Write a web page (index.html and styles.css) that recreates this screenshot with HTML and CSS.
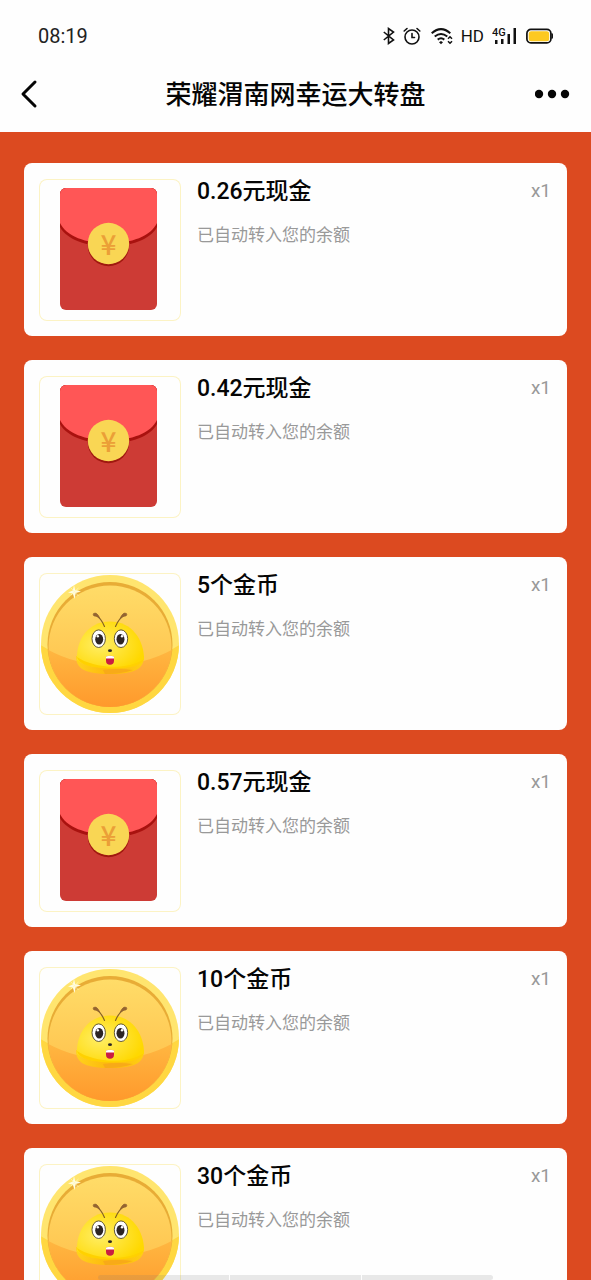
FILE: index.html
```html
<!DOCTYPE html>
<html lang="zh-CN">
<head>
<meta charset="utf-8">
<meta name="viewport" content="width=device-width, initial-scale=1">
<title>荣耀渭南网幸运大转盘</title>
<link rel="stylesheet" href="styles.css">
</head>
<body>
<svg class="sprite" aria-hidden="true">
  <defs>
    <linearGradient id="coinTop" x1="0" y1="0" x2="0" y2="1">
      <stop offset="0" stop-color="#ffdc68"/><stop offset="1" stop-color="#ffb944"/>
    </linearGradient>
    <linearGradient id="coinLow" gradientUnits="userSpaceOnUse" x1="0" y1="74" x2="0" y2="134">
      <stop offset="0" stop-color="#ffb842"/><stop offset="1" stop-color="#ff992c"/>
    </linearGradient>
    <radialGradient id="beeBody" cx="0.35" cy="0.5" r="0.65">
      <stop offset="0" stop-color="#ffee66"/><stop offset="1" stop-color="#ffd800"/>
    </radialGradient>
    <linearGradient id="beeBase" x1="0" y1="0" x2="1" y2="0">
      <stop offset="0" stop-color="#ffd21c"/><stop offset="0.5" stop-color="#fdb70c"/><stop offset="1" stop-color="#ffcf12"/>
    </linearGradient>
    <clipPath id="coinClip"><circle cx="71" cy="71" r="69"/></clipPath>
    <clipPath id="faceClip"><circle cx="71" cy="72" r="62"/></clipPath>
    <clipPath id="packetClip"><rect x="21" y="9" width="97" height="122" rx="6"/></clipPath>
  </defs>
  <symbol id="coin" viewBox="0 0 142 142">
    <circle cx="71" cy="71" r="69" fill="#ffe56f"/>
    <path d="M0 71Q32 92 71 92T142 71V142H0Z" fill="#ffd741" clip-path="url(#coinClip)"/>
    <circle cx="71" cy="71.500" r="62.500" fill="#e8ac36"/>
    <g clip-path="url(#faceClip)">
      <circle cx="71" cy="74" r="61.500" fill="url(#coinTop)"/>
      <path d="M6 75Q35 92 71 92T136 75V142H6Z" fill="url(#coinLow)"/>
    </g>
    <path d="M37 83C37 94 43 101 71 101S105 94 105 83Z" fill="url(#beeBase)"/>
    <path d="M38 87C37 67 49 48.500 71 48.500S105 67 105 86C97 92 86 94.500 70 94.500S44 92 38 87Z" fill="url(#beeBody)"/>
    <path d="M38 84C52 94 86 99 105 86C103 92 91 96 72 95.500C53 95 40 92 38 84Z" fill="#ffd100"/>
    <path d="M66 101Q83 101 94 97Q80 95 64 97Z" fill="#f8aa18"/>
    <path d="M65.500 53.500Q62 45 56.500 42M76.500 53.500Q80 45 86 42" fill="none" stroke="#866325" stroke-width="1.200" stroke-linecap="round"/>
    <path d="M54.500 40.500Q58 38.500 61 45.500Q57.500 42.500 55 43Q53.500 42 54.500 40.500ZM87.500 40.500Q84 38.500 81 45.500Q84.500 42.500 87 43Q88.500 42 87.500 40.500Z" fill="#946431" stroke="#946431" stroke-width="0.600"/>
    <g fill="#fff" stroke="#4d452e" stroke-width="0.900">
      <ellipse cx="59.700" cy="65.700" rx="6.700" ry="8.800"/><ellipse cx="82" cy="65.700" rx="6.700" ry="8.800"/>
    </g>
    <g fill="#2c2525">
      <ellipse cx="60.200" cy="66.300" rx="4" ry="5.200"/><ellipse cx="81.500" cy="66.300" rx="4" ry="5.200"/>
      <ellipse cx="71" cy="77.700" rx="2" ry="1.400"/>
    </g>
    <circle cx="58.800" cy="63.300" r="1.200" fill="#fff"/><circle cx="83" cy="63.300" r="1.200" fill="#fff"/>
    <path d="M67 83.500Q71 82 75 83.500V87.500C75 90.500 73.500 91.800 71 91.800S67 90.500 67 87.500Z" fill="#c91d43"/>
    <path d="M67 83.500Q71 82 75 83.500V85.500H67Z" fill="#fff"/>
    <path d="M35 12L36.200 17L42 18.500L36.800 20L35.500 26L33.800 20.500L29 19.500L33.800 17.500Z" fill="#fffce0"/>
    <path d="M31.500 14.500L39.500 23M39.500 15L32 22" stroke="#fff6bd" stroke-width="0.700"/>
  </symbol>
</svg>

<div class="screen">
  <header class="top">
    <div class="status">
      <span class="time">08:19</span>
      <div class="indicators">
        <svg width="12" height="18" viewBox="0 0 12 18" fill="none" stroke="#111" stroke-width="1.600"><path d="M0.800 5L10.500 13L5.500 16.500V1.500L10.500 5L0.800 13"/></svg>
        <svg width="20" height="18" viewBox="0 0 20 18" fill="none" stroke="#111" stroke-width="1.600" stroke-linecap="round"><circle cx="9" cy="10" r="7"/><path d="M9 6.500V10.500H11.500M1.200 4L4 1.500M16.800 4L14 1.500"/></svg>
        <svg width="22" height="18" viewBox="0 0 22 18" fill="none" stroke="#111" stroke-width="2"><path d="M0.700 6.200Q10 -2 19.300 6.200M3.700 9.500Q10 4.500 16.300 9.500M6.700 12.600Q10 10 13.300 12.600"/><path d="M10 14L12 15.300L10 17.300L8 15.300Z" fill="#111" stroke="none"/><path d="M17 11.800L19 9.800L21 11.800M17 14.200L19 16.200L21 14.200" stroke-width="1.500"/></svg>
        <span class="hd">HD</span>
        <svg width="26" height="18" viewBox="0 0 26 18" fill="#111"><text class="net" x="0" y="9">4G</text><path d="M3 13H5.500V17H3ZM9 12H11.500V17H9ZM15.500 7H18V17H15.500ZM21.500 1H24V17H21.500Z"/></svg>
        <svg width="27" height="18" viewBox="0 0 27 18"><rect x="0.900" y="2.400" width="24" height="13.500" rx="4" fill="#fff" stroke="#111" stroke-width="1.700"/><path d="M26 6.500Q27.500 9 26 11.500Z" fill="#111" stroke="#111"/><rect x="2.700" y="4.200" width="20.500" height="10" rx="2.500" fill="#fdc921"/></svg>
      </div>
    </div>
    <div class="nav">
      <button class="icon-button" aria-label="返回"><svg width="18" height="30" viewBox="0 0 18 30" fill="none" stroke="#050505" stroke-width="3" stroke-linecap="round" stroke-linejoin="round"><path d="M15 3L3 15L15 27"/></svg></button>
      <h1>荣耀渭南网幸运大转盘</h1>
      <button class="icon-button" aria-label="更多"><svg width="36" height="30" viewBox="0 0 36 30" fill="#050505"><circle cx="4" cy="15" r="4.200"/><circle cx="17" cy="15" r="4.200"/><circle cx="30" cy="15" r="4.200"/></svg></button>
    </div>
  </header>
  <main class="prizes">
    <article class="card">
      <svg class="thumb" viewBox="0 0 142 142" role="img" aria-label="现金红包">
        <g id="packet">
          <g clip-path="url(#packetClip)">
            <rect x="21" y="9" width="97" height="122" fill="#cd3b35"/>
            <path d="M21 9H118V48C112 60 92 67.500 69.500 67.500S27 60 21 48Z" fill="#a9120f"/>
            <path d="M21 9H118V44C112 57 92 64.500 69.500 64.500S27 57 21 44Z" fill="#ff5656"/>
          </g>
          <circle cx="69.500" cy="66.500" r="20.700" fill="#a0180f"/>
          <circle cx="69.500" cy="64.500" r="20.700" fill="#f9d654"/>
          <text class="yen" x="69.500" y="76" text-anchor="middle">¥</text>
        </g>
      </svg>
      <div class="info"><h2>0.26元现金</h2><p>已自动转入您的余额</p></div>
      <span class="count">x1</span>
    </article>
    <article class="card">
      <svg class="thumb" viewBox="0 0 142 142" role="img" aria-label="现金红包"><use href="#packet"/></svg>
      <div class="info"><h2>0.42元现金</h2><p>已自动转入您的余额</p></div>
      <span class="count">x1</span>
    </article>
    <article class="card">
      <svg class="thumb" viewBox="0 0 142 142" role="img" aria-label="金币"><use href="#coin"/></svg>
      <div class="info"><h2>5个金币</h2><p>已自动转入您的余额</p></div>
      <span class="count">x1</span>
    </article>
    <article class="card">
      <svg class="thumb" viewBox="0 0 142 142" role="img" aria-label="现金红包"><use href="#packet"/></svg>
      <div class="info"><h2>0.57元现金</h2><p>已自动转入您的余额</p></div>
      <span class="count">x1</span>
    </article>
    <article class="card">
      <svg class="thumb" viewBox="0 0 142 142" role="img" aria-label="金币"><use href="#coin"/></svg>
      <div class="info"><h2>10个金币</h2><p>已自动转入您的余额</p></div>
      <span class="count">x1</span>
    </article>
    <article class="card">
      <svg class="thumb" viewBox="0 0 142 142" role="img" aria-label="金币"><use href="#coin"/></svg>
      <div class="info"><h2>30个金币</h2><p>已自动转入您的余额</p></div>
      <span class="count">x1</span>
    </article>
  </main>
  <div class="gesture-bar"><span></span><span></span><span></span></div>
</div>
</body>
</html>
```

FILE: styles.css
```css
* { box-sizing: border-box; }

body {
  margin: 0;
  font-family: Roboto, "Noto Sans CJK SC", sans-serif;
  color: #050505;
  background: #dc4a20;
}

h1, h2, p { margin: 0; }

.sprite {
  position: absolute;
  width: 0;
  height: 0;
}

.screen {
  display: flex;
  flex-direction: column;
  height: 100vh;
}

.top {
  flex: none;
  background: #fefefe;
}

.status {
  display: flex;
  align-items: center;
  justify-content: space-between;
  padding: 24px 38px 0;
  line-height: 24px;
}

.time {
  font-size: 20px;
  color: #222;
}

.indicators {
  display: flex;
  align-items: center;
  gap: 8px;
}

.hd {
  font-size: 17px;
  color: #111;
}

.net {
  font-size: 11px;
  font-weight: 500;
}

.nav {
  display: grid;
  grid-template-columns: 48px 1fr 48px;
  align-items: center;
  padding: 26px 20px 18px;
  line-height: 40px;
}

.nav h1 {
  padding-top: 2px;
  font-size: 26px;
  font-weight: 500;
  line-height: 38px;
  text-align: center;
}

.icon-button {
  display: flex;
  padding: 0;
  border: 0;
  background: none;
}

.icon-button:last-child { justify-self: end; }

.prizes {
  flex: 1;
  min-height: 0;
  display: flex;
  flex-direction: column;
  gap: 24px;
  padding: 31px 24px;
  overflow-y: auto;
  scrollbar-width: none;
}

.card {
  flex: none;
  display: flex;
  align-items: flex-start;
  gap: 16px;
  padding: 16px 16px 15px 15px;
  border-radius: 8px;
  background: #fefefe;
}

.thumb {
  flex: none;
  width: 142px;
  height: 142px;
  border-radius: 8px;
  box-shadow: inset 0 0 0 1px #fcf3c4;
}

.yen {
  font: 500 28px "Noto Sans CJK SC", sans-serif;
  fill: #eb9f37;
}

.info { flex: 1; }

.info h2 {
  font-size: 23px;
  font-weight: 500;
  line-height: 26px;
}

.info p {
  margin-top: 18px;
  font-size: 17px;
  line-height: 24px;
  color: #999;
}

.count {
  font-size: 19px;
  line-height: 24px;
  color: #999;
}

.gesture-bar {
  position: fixed;
  bottom: 0;
  left: 50%;
  display: flex;
  gap: 1px;
  width: 67%;
  height: 5px;
  transform: translateX(-50%);
  border-radius: 3px;
  overflow: hidden;
}

.gesture-bar span {
  flex: 1;
  background: rgba(120, 120, 120, 0.16);
}
```
